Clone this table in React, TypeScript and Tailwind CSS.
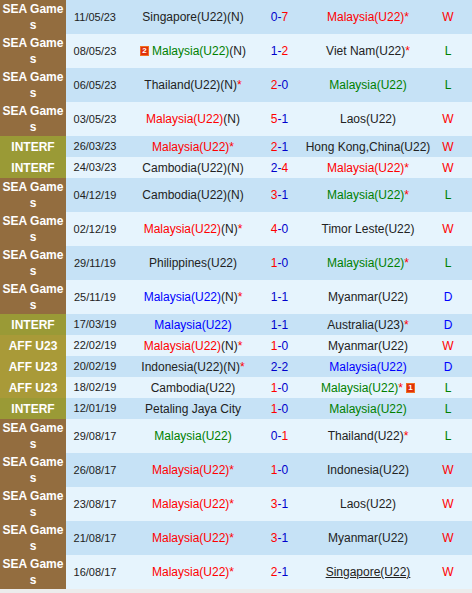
type Tone = "r" | "g" | "b";

interface Team {
    name: string;
    c?: Tone;
    n?: boolean;
    star?: boolean;
    card?: number;
    u?: boolean;
}

interface Match {
    comp: "SEA" | "INTERF" | "AFF";
    date: string;
    home: Team;
    score: string;
    away: Team;
    res: "W" | "L" | "D";
}

const M = (c: Tone, extra: Partial<Team> = {}): Team => ({ name: "Malaysia(U22)", c, ...extra });

const matches: Match[] = [
    { comp: "SEA", date: "11/05/23", home: { name: "Singapore(U22)", n: true }, score: "0-7", away: M("r", { star: true }), res: "W" },
    { comp: "SEA", date: "08/05/23", home: M("g", { n: true, card: 2 }), score: "1-2", away: { name: "Viet Nam(U22)", star: true }, res: "L" },
    { comp: "SEA", date: "06/05/23", home: { name: "Thailand(U22)", n: true, star: true }, score: "2-0", away: M("g"), res: "L" },
    { comp: "SEA", date: "03/05/23", home: M("r", { n: true }), score: "5-1", away: { name: "Laos(U22)" }, res: "W" },
    { comp: "INTERF", date: "26/03/23", home: M("r", { star: true }), score: "2-1", away: { name: "Hong Kong,China(U22)" }, res: "W" },
    { comp: "INTERF", date: "24/03/23", home: { name: "Cambodia(U22)", n: true }, score: "2-4", away: M("r", { star: true }), res: "W" },
    { comp: "SEA", date: "04/12/19", home: { name: "Cambodia(U22)", n: true }, score: "3-1", away: M("g", { star: true }), res: "L" },
    { comp: "SEA", date: "02/12/19", home: M("r", { n: true, star: true }), score: "4-0", away: { name: "Timor Leste(U22)" }, res: "W" },
    { comp: "SEA", date: "29/11/19", home: { name: "Philippines(U22)" }, score: "1-0", away: M("g", { star: true }), res: "L" },
    { comp: "SEA", date: "25/11/19", home: M("b", { n: true, star: true }), score: "1-1", away: { name: "Myanmar(U22)" }, res: "D" },
    { comp: "INTERF", date: "17/03/19", home: M("b"), score: "1-1", away: { name: "Australia(U23)", star: true }, res: "D" },
    { comp: "AFF", date: "22/02/19", home: M("r", { n: true, star: true }), score: "1-0", away: { name: "Myanmar(U22)" }, res: "W" },
    { comp: "AFF", date: "20/02/19", home: { name: "Indonesia(U22)", n: true, star: true }, score: "2-2", away: M("b"), res: "D" },
    { comp: "AFF", date: "18/02/19", home: { name: "Cambodia(U22)" }, score: "1-0", away: M("g", { star: true, card: 1 }), res: "L" },
    { comp: "INTERF", date: "12/01/19", home: { name: "Petaling Jaya City" }, score: "1-0", away: M("g"), res: "L" },
    { comp: "SEA", date: "29/08/17", home: M("g"), score: "0-1", away: { name: "Thailand(U22)", star: true }, res: "L" },
    { comp: "SEA", date: "26/08/17", home: M("r", { star: true }), score: "1-0", away: { name: "Indonesia(U22)" }, res: "W" },
    { comp: "SEA", date: "23/08/17", home: M("r", { star: true }), score: "3-1", away: { name: "Laos(U22)" }, res: "W" },
    { comp: "SEA", date: "21/08/17", home: M("r", { star: true }), score: "3-1", away: { name: "Myanmar(U22)" }, res: "W" },
    { comp: "SEA", date: "16/08/17", home: M("r", { star: true }), score: "2-1", away: { name: "Singapore(U22)", u: true }, res: "W" },
];

const tone: Record<Tone, string> = {
    r: "text-[#ff0000]",
    g: "text-[#008000]",
    b: "text-[#0000ff]",
};

const compStyle = {
    SEA: { label: "SEA Games", bg: "bg-[#936d3f]" },
    INTERF: { label: "INTERF", bg: "bg-[#9a9a36]" },
    AFF: { label: "AFF U23", bg: "bg-[#a99a38]" },
};

// red-card count badge
function Card({ n }: { n: number }) {
    return (
        <span className="inline-flex h-[10px] w-[9px] items-center justify-center border border-[#f07020] bg-[#e0300c] text-[8px] font-bold leading-none text-white">
            {n}
        </span>
    );
}

function TeamCell({ t, side }: { t: Team; side: "home" | "away" }) {
    return (
        <div className="flex items-center justify-center gap-[3px] whitespace-nowrap">
            {side === "home" && t.card ? <Card n={t.card} /> : null}
            <span>
                <span className={`${t.c ? tone[t.c] : "text-[#222222]"} ${t.u ? "underline" : ""}`}>{t.name}</span>
                {t.n && <span className="text-[#222222]">(N)</span>}
                {t.star && <span className="text-[#ff0000]">*</span>}
            </span>
            {side === "away" && t.card ? <Card n={t.card} /> : null}
        </div>
    );
}

function Score({ s }: { s: string }) {
    const [h, a] = s.split("-").map(Number);
    if (h > a)
        return (
            <span>
                <span className="text-[#ff0000]">{h}</span>
                <span className="text-[#0000cc]">-{a}</span>
            </span>
        );
    if (h < a)
        return (
            <span>
                <span className="text-[#0000cc]">{h}-</span>
                <span className="text-[#ff0000]">{a}</span>
            </span>
        );
    return <span className="text-[#0000cc]">{s}</span>;
}

const resColor = { W: "text-[#ff0000]", L: "text-[#008000]", D: "text-[#0000ff]" };

export default function App() {
    return (
        <div className="min-h-screen w-[472px] bg-[#ececec] font-['Liberation_Sans',Arial,sans-serif] text-[12px]">
            {matches.map((m, i) => {
                const tall = m.comp === "SEA";
                const cs = compStyle[m.comp];
                return (
                    <div
                        key={i}
                        className={`grid grid-cols-[66px_58px_138px_35px_142px_33px] items-center ${
                            tall ? "h-[34px]" : "h-[21px]"
                        } ${i % 2 === 0 ? "bg-[#c6e2f6]" : "bg-[#e6f4fd]"}`}
                    >
                        <div
                            className={`flex h-full items-center justify-center break-all px-px text-center font-bold leading-4 text-white ${cs.bg}`}
                        >
                            {cs.label}
                        </div>
                        <div className="text-center text-[11px] text-[#222222]">{m.date}</div>
                        <TeamCell t={m.home} side="home" />
                        <div className="text-center">
                            <Score s={m.score} />
                        </div>
                        <TeamCell t={m.away} side="away" />
                        <div className={`pr-[15px] text-center ${resColor[m.res]}`}>{m.res}</div>
                    </div>
                );
            })}
        </div>
    );
}
